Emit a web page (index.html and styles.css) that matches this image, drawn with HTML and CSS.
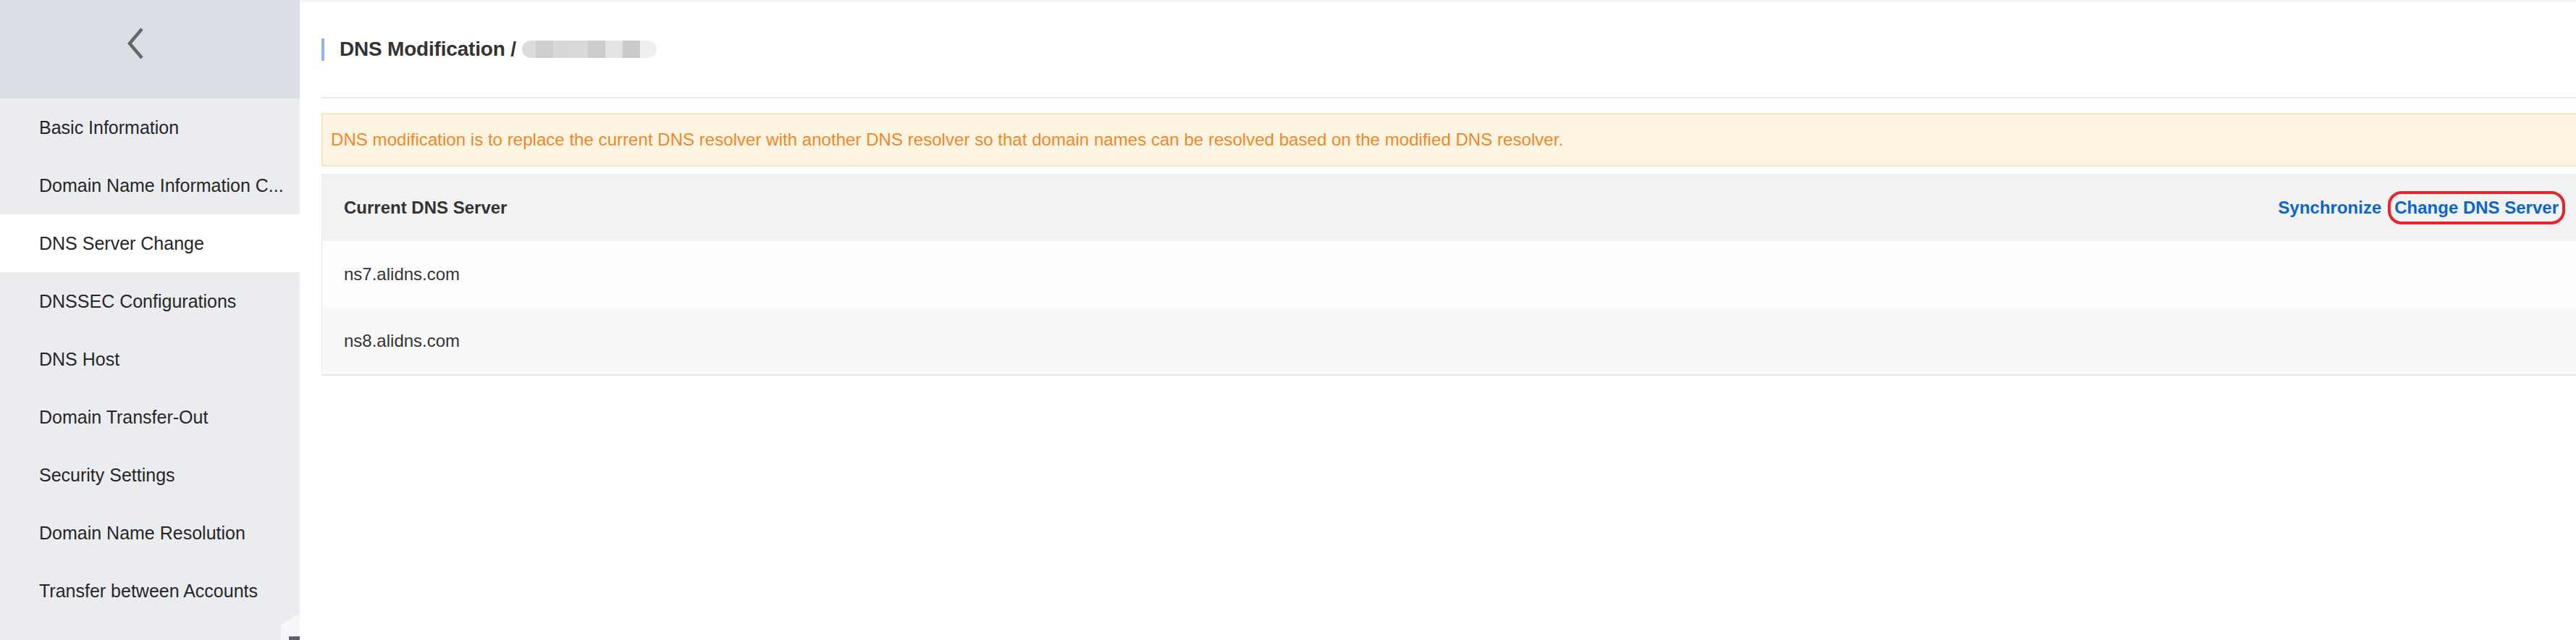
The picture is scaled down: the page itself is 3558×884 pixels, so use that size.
FILE: index.html
```html
<!DOCTYPE html>
<html lang="en">

<head>
  <meta charset="UTF-8" />
  <title>DNS Modification</title>
  <link rel="stylesheet" href="styles.css">
</head>

<body>
  <aside class="sidebar">
    <div class="sidebar-top">
      <svg class="back-icon" width="24" height="44" viewBox="0 0 24 44">
        <polyline points="20,2 3,22 20,42" fill="none" stroke="#666" stroke-width="4.6" />
      </svg>
    </div>
    <ul class="menu">
      <li>Basic Information</li>
      <li>Domain Name Information C...</li>
      <li class="active">DNS Server Change</li>
      <li>DNSSEC Configurations</li>
      <li>DNS Host</li>
      <li>Domain Transfer-Out</li>
      <li>Security Settings</li>
      <li>Domain Name Resolution</li>
      <li>Transfer between Accounts</li>
    </ul>
    <!-- handle peeking at the bottom corner -->
    <svg class="collapse-handle" width="26" height="37" viewBox="0 0 26 37">
      <polygon points="0,16 26,0 26,37 0,37" fill="#f6f7f9" />
      <rect x="11" y="32" width="15" height="5" fill="#5b6372" />
    </svg>
  </aside>

  <main class="main">
    <div class="page-head">
      <span class="head-bar"></span>
      <h1>DNS Modification /</h1>
      <span class="masked">
        <i class="m1"></i><i class="m2"></i><i class="m3"></i><i class="m4"></i>
        <i class="m5"></i><i class="m6"></i><i class="m7"></i><i class="m8"></i>
      </span>
    </div>

    <div class="notice">
      DNS modification is to replace the current DNS resolver with another DNS resolver so that domain names can be resolved based on the modified DNS resolver.
    </div>

    <div class="dns-table">
      <div class="dns-row dns-head">
        <span>Current DNS Server</span>
        <div class="actions">
          <a class="link">Synchronize</a>
          <a class="link marked">Change DNS Server</a>
        </div>
      </div>
      <div class="dns-row">ns7.alidns.com</div>
      <div class="dns-row odd">ns8.alidns.com</div>
    </div>
  </main>
</body>

</html>
```

FILE: styles.css
```css
* {
  box-sizing: border-box;
}

body {
  margin: 0;
  font-family: "Liberation Sans", Arial, sans-serif;
  display: flex;
  height: 100vh;
  overflow: hidden;
  background: #fff;
}

/* sidebar */
.sidebar {
  width: 414px;
  flex-shrink: 0;
  background: #ebecf0;
  position: relative;
}

.sidebar-top {
  height: 136px;
  background: #dadfe6;
  display: flex;
  justify-content: center;
  padding-top: 38px;
  padding-right: 38px;
}

.menu {
  list-style: none;
  margin: 0;
  padding: 0;
}

.menu li {
  height: 80px;
  display: flex;
  align-items: center;
  padding-left: 54px;
  font-size: 25px;
  color: #262626;
}

.menu li.active {
  background: #fff;
}

.collapse-handle {
  position: absolute;
  right: 0;
  bottom: 0;
}

/* main */
.main {
  flex: 1;
  padding-left: 30px;
  background: linear-gradient(#eeeeee, #fff 4px);
  min-width: 0;
}

.page-head {
  height: 136px;
  display: flex;
  align-items: center;
  border-bottom: 2px solid #e9e9e9;
  padding-top: 2px;
}

.head-bar {
  width: 4px;
  height: 31px;
  background: #8bb5e2;
  margin-right: 21px;
}

.page-head h1 {
  margin: 0;
  font-size: 28px;
  font-weight: bold;
  color: #333;
  letter-spacing: -0.2px;
}

.masked {
  display: flex;
  height: 24px;
  margin-left: 8px;
  border-radius: 12px;
  overflow: hidden;
}

.masked i {
  width: 24px;
  height: 24px;
}

.masked .m1 { background: #dcdcdc; width: 19px; }
.masked .m2 { background: #cfcfcf; }
.masked .m3 { background: #d8d8d8; }
.masked .m4 { background: #d9d9d9; }
.masked .m5 { background: #cdcdcd; }
.masked .m6 { background: #e3e3e3; }
.masked .m7 { background: #cbcbcb; }
.masked .m8 { background: #efefef; width: 23px; }

.notice {
  margin-top: 20px;
  margin-right: -4px;
  height: 74px;
  background: #fdf5e1;
  border: 2px solid #f8e3bb;
  display: flex;
  align-items: center;
  padding-left: 11px;
  font-size: 24.1px;
  color: #f0862a;
  white-space: nowrap;
}

.dns-table {
  margin-top: 10px;
  border-left: 1px solid #e8e8e8;
  border-top: 1px solid #eeeeee;
  border-bottom: 2px solid #e6e6e6;
}

.dns-row {
  height: 92px;
  display: flex;
  align-items: center;
  justify-content: space-between;
  padding: 0 24px 0 30px;
  font-size: 24px;
  color: #333;
  background: #fdfdfd;
}

.dns-row.odd {
  background: #f8f8f8;
}

.dns-head {
  background: #f2f2f2;
  font-weight: bold;
}

.actions {
  display: flex;
  gap: 18px;
}

.link {
  color: #0a66cc;
  font-weight: bold;
  line-height: 28px;
  cursor: pointer;
}

.link.marked {
  border-radius: 10px;
  outline: 4px solid #e8242a;
  outline-offset: 5px;
}
```
